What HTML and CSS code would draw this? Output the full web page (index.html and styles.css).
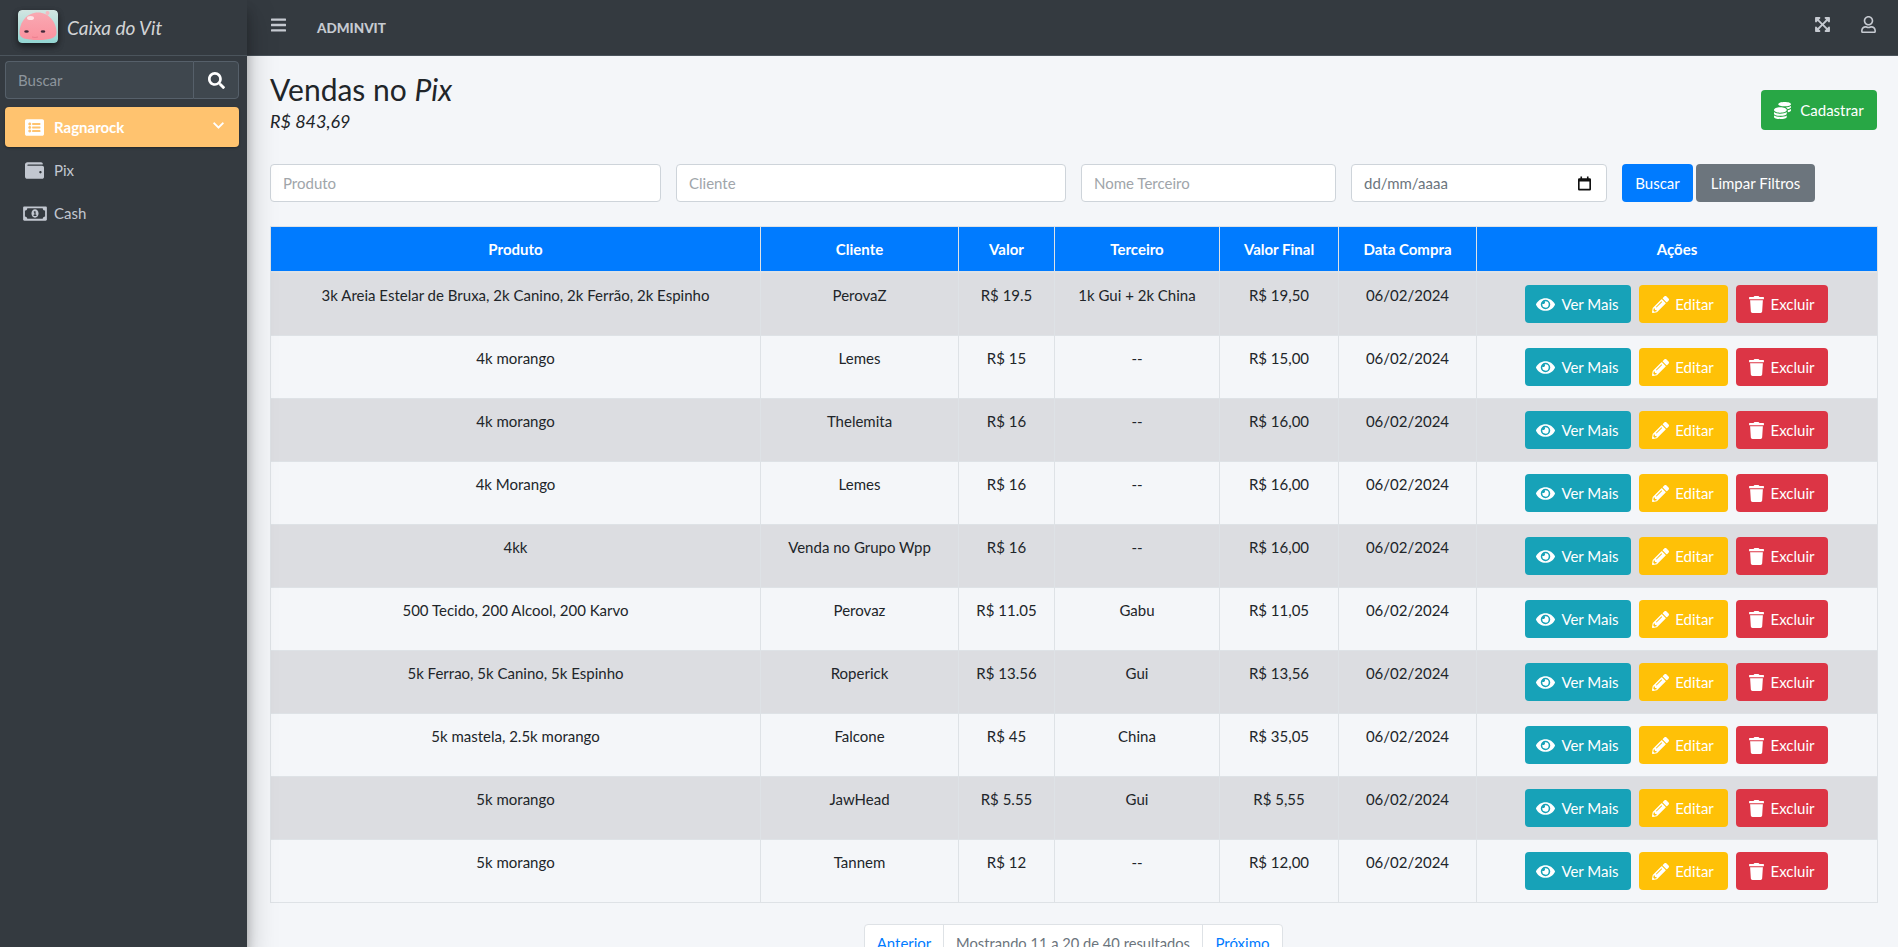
FILE: index.html
```html
<!DOCTYPE html>
<html lang="pt-BR">
<head>
<meta charset="utf-8">
<title>Vendas no Pix</title>
<link rel="stylesheet" href="styles.css">
</head>
<body>
<svg class="sprite" xmlns="http://www.w3.org/2000/svg">
<symbol id="i-search" viewBox="0 0 512 512"><path d="M505 442.7L405.3 343c-4.5-4.5-10.6-7-17-7H372c27.6-35.3 44-79.7 44-128C416 93.1 322.9 0 208 0S0 93.1 0 208s93.1 208 208 208c48.3 0 92.7-16.4 128-44v16.3c0 6.4 2.5 12.5 7 17l99.7 99.7c9.4 9.4 24.6 9.4 33.9 0l28.3-28.3c9.4-9.4 9.4-24.6.1-34zM208 336c-70.7 0-128-57.2-128-128 0-70.7 57.2-128 128-128 70.7 0 128 57.2 128 128 0 70.7-57.2 128-128 128z"/></symbol>
<symbol id="i-bars" viewBox="0 0 448 512"><path d="M16 132h416c8.837 0 16-7.163 16-16V76c0-8.837-7.163-16-16-16H16C7.163 60 0 67.163 0 76v40c0 8.837 7.163 16 16 16zm0 160h416c8.837 0 16-7.163 16-16v-40c0-8.837-7.163-16-16-16H16c-8.837 0-16 7.163-16 16v40c0 8.837 7.163 16 16 16zm0 160h416c8.837 0 16-7.163 16-16v-40c0-8.837-7.163-16-16-16H16c-8.837 0-16 7.163-16 16v40c0 8.837 7.163 16 16 16z"/></symbol>
<symbol id="i-eye" viewBox="0 0 576 512"><path d="M572.52 241.4C518.29 135.59 410.93 64 288 64S57.68 135.64 3.48 241.41a32.35 32.35 0 0 0 0 29.19C57.71 376.41 165.07 448 288 448s230.32-71.64 284.52-177.41a32.35 32.35 0 0 0 0-29.19zM288 400a144 144 0 1 1 144-144 143.93 143.93 0 0 1-144 144zm0-240a95.31 95.31 0 0 0-25.31 3.79 47.85 47.85 0 0 1-66.9 66.9A95.78 95.78 0 1 0 288 160z"/></symbol>
<symbol id="i-pencil" viewBox="0 0 512 512"><path d="M497.9 142.1l-46.1 46.1c-4.7 4.7-12.3 4.7-17 0l-111-111c-4.7-4.7-4.7-12.3 0-17l46.1-46.1c18.7-18.7 49.1-18.7 67.9 0l60.1 60.1c18.8 18.7 18.8 49.1 0 67.9zM284.2 99.8L21.6 362.4.4 483.9c-2.9 16.4 11.4 30.6 27.8 27.8l121.5-21.3 262.6-262.6c4.7-4.7 4.7-12.3 0-17l-111-111c-4.8-4.7-12.4-4.7-17.1 0zM124.1 339.9c-5.5-5.5-5.5-14.3 0-19.8l154-154c5.5-5.5 14.3-5.5 19.8 0s5.5 14.3 0 19.8l-154 154c-5.5 5.5-14.3 5.5-19.8 0zM88 424h48v36.3l-64.5 11.3-31.1-31.1L51.7 376H88v48z"/></symbol>
<symbol id="i-trash" viewBox="0 0 448 512"><path d="M432 32H312l-9.4-18.7A24 24 0 0 0 281.1 0H166.8a23.72 23.72 0 0 0-21.4 13.3L136 32H16A16 16 0 0 0 0 48v32a16 16 0 0 0 16 16h416a16 16 0 0 0 16-16V48a16 16 0 0 0-16-16zM53.2 467a48 48 0 0 0 47.9 45h245.8a48 48 0 0 0 47.9-45L416 128H32z"/></symbol>
<symbol id="i-wallet" viewBox="0 0 512 512"><path d="M461.2 128H80c-8.84 0-16-7.16-16-16s7.16-16 16-16h384c8.84 0 16-7.16 16-16 0-26.51-21.49-48-48-48H64C28.65 32 0 60.65 0 96v320c0 35.35 28.65 64 64 64h397.2c28.02 0 50.8-21.53 50.8-48V176c0-26.47-22.78-48-50.8-48zM416 336c-17.67 0-32-14.33-32-32s14.33-32 32-32 32 14.33 32 32-14.33 32-32 32z"/></symbol>
<symbol id="i-money" viewBox="0 0 640 512"><path d="M320 144c-53.02 0-96 50.14-96 112 0 61.85 42.98 112 96 112 53 0 96-50.13 96-112 0-61.86-42.98-112-96-112zm40 168c0 4.42-3.58 8-8 8h-64c-4.42 0-8-3.58-8-8v-16c0-4.42 3.58-8 8-8h16v-55.44l-.47.31a7.992 7.992 0 0 1-11.09-2.22l-8.88-13.31a7.992 7.992 0 0 1 2.22-11.09l15.33-10.22a23.99 23.99 0 0 1 13.31-4.03H328c4.42 0 8 3.58 8 8v88h16c4.42 0 8 3.58 8 8v16zM608 64H32C14.33 64 0 78.33 0 96v320c0 17.67 14.33 32 32 32h576c17.67 0 32-14.33 32-32V96c0-17.67-14.33-32-32-32zm-16 272c-35.35 0-64 28.65-64 64H112c0-35.35-28.65-64-64-64V176c35.35 0 64-28.65 64-64h416c0 35.35 28.65 64 64 64v160z"/></symbol>
<symbol id="i-list" viewBox="0 0 512 512"><path d="M464 480H48c-26.51 0-48-21.49-48-48V80c0-26.51 21.49-48 48-48h416c26.51 0 48 21.49 48 48v352c0 26.51-21.49 48-48 48zM128 120c-22.091 0-40 17.909-40 40s17.909 40 40 40 40-17.909 40-40-17.909-40-40-40zm0 96c-22.091 0-40 17.909-40 40s17.909 40 40 40 40-17.909 40-40-17.909-40-40-40zm0 96c-22.091 0-40 17.909-40 40s17.909 40 40 40 40-17.909 40-40-17.909-40-40-40zm288-136v-32c0-6.627-5.373-12-12-12H204c-6.627 0-12 5.373-12 12v32c0 6.627 5.373 12 12 12h200c6.627 0 12-5.373 12-12zm0 96v-32c0-6.627-5.373-12-12-12H204c-6.627 0-12 5.373-12 12v32c0 6.627 5.373 12 12 12h200c6.627 0 12-5.373 12-12zm0 96v-32c0-6.627-5.373-12-12-12H204c-6.627 0-12 5.373-12 12v32c0 6.627 5.373 12 12 12h200c6.627 0 12-5.373 12-12z"/></symbol>
<symbol id="i-chevron" viewBox="0 0 448 512"><path d="M207.029 381.476L12.686 187.132c-9.373-9.373-9.373-24.569 0-33.941l22.667-22.667c9.357-9.357 24.522-9.375 33.901-.04L224 284.505l154.745-154.021c9.379-9.335 24.544-9.317 33.901.04l22.667 22.667c9.373 9.373 9.373 24.569 0 33.941L240.971 381.476c-9.373 9.372-24.569 9.372-33.942 0z"/></symbol>
<symbol id="i-expand" viewBox="0 0 448 512"><path d="M448 344v112a23.94 23.94 0 0 1-24 24H312c-21.39 0-32.09-25.9-17-41l36.2-36.2L224 295.6 116.77 402.9 153 439c15.09 15.1 4.39 41-17 41H24a23.94 23.94 0 0 1-24-24V344c0-21.4 25.89-32.1 41-17l36.19 36.2L184.46 256 77.18 148.7 41 185c-15.1 15.1-41 4.4-41-17V56a23.94 23.94 0 0 1 24-24h112c21.39 0 32.09 25.9 17 41l-36.2 36.2L224 216.4l107.23-107.3L295 73c-15.09-15.1-4.39-41 17-41h112a23.94 23.94 0 0 1 24 24v112c0 21.4-25.89 32.1-41 17l-36.19-36.2L263.54 256l107.28 107.3L407 327.1c15.1-15.2 41-4.5 41 16.9z"/></symbol>
<symbol id="i-user" viewBox="0 0 448 512"><path d="M313.6 304c-28.7 0-42.5 16-89.6 16-47.1 0-60.8-16-89.6-16C60.2 304 0 364.2 0 438.4V464c0 26.5 21.5 48 48 48h352c26.5 0 48-21.5 48-48v-25.6c0-74.2-60.2-134.4-134.4-134.4zM400 464H48v-25.6c0-47.6 38.8-86.4 86.4-86.4 14.6 0 38.3 16 89.6 16 51.7 0 74.9-16 89.6-16 47.6 0 86.4 38.8 86.4 86.4V464zM224 288c79.5 0 144-64.5 144-144S303.5 0 224 0 80 64.5 80 144s64.5 144 144 144zm0-240c52.9 0 96 43.1 96 96s-43.1 96-96 96-96-43.1-96-96 43.1-96 96-96z"/></symbol>
<symbol id="i-coins" viewBox="0 0 512 512"><path d="M0 405.3V448c0 35.3 86 64 192 64s192-28.7 192-64v-42.7C342.7 434.4 267.2 448 192 448S41.3 434.4 0 405.3zM320 128c106 0 192-28.7 192-64S426 0 320 0 128 28.7 128 64s86 64 192 64zM0 300.4V352c0 35.3 86 64 192 64s192-28.7 192-64v-51.6c-41.3 34-116.9 51.6-192 51.6S41.3 334.4 0 300.4zm416 11c57.3-11.1 96-31.7 96-55.4v-42.7c-23.2 16.4-57.3 27.6-96 34.5v63.6zM192 160C86 160 0 195.8 0 240s86 80 192 80 192-35.8 192-80-86-80-192-80zm219.3 56.3c60-10.8 100.7-32 100.7-56.3v-42.7c-35.5 25.1-96.5 38.6-160.7 41.8 29.5 14.3 51.2 33.5 60 57.2z"/></symbol>
<symbol id="i-calendar" viewBox="0 0 16 17"><path d="M3 0h2v2h6V0h2v2h1.500A1.500 1.500 0 0 1 16 3.500v12a1.500 1.500 0 0 1-1.500 1.500h-13A1.500 1.500 0 0 1 0 15.500v-12A1.500 1.500 0 0 1 1.500 2H3zM2 6v9h12V6z"/></symbol>
</svg>

<aside class="sidebar">
  <a class="brand">
    <svg class="logo" viewBox="0 0 40 33" xmlns="http://www.w3.org/2000/svg">
      <defs>
        <linearGradient id="logo-bg" x1="0" y1="0" x2="0" y2="1"><stop offset="0" stop-color="#d2e6e2"/><stop offset="1" stop-color="#93d5d2"/></linearGradient>
        <linearGradient id="logo-blob" x1="0" y1="0" x2="0" y2="1"><stop offset="0" stop-color="#f9a9b2"/><stop offset="1" stop-color="#fa929f"/></linearGradient>
      </defs>
      <rect width="40" height="33" rx="4" fill="url(#logo-bg)"/>
      <path d="M1.500 23C1.500 12 9 2.500 20 2.500c11 0 18.500 10 18.500 20 0 5.500-6 7.500-18.500 7.500S1.500 28 1.500 23z" fill="url(#logo-blob)"/>
      <ellipse cx="12.500" cy="8" rx="3.500" ry="2" fill="#fde4e7"/>
      <circle cx="29.500" cy="3" r="2" fill="#f4b8bf"/>
      <ellipse cx="8.500" cy="21.500" rx="2.300" ry="1.200" fill="#43293a"/>
      <ellipse cx="25" cy="21.500" rx="2.300" ry="1.200" fill="#43293a"/>
      <path d="M14 27q3 1 6 0" stroke="#e87a8a" stroke-width=".8" fill="none"/>
    </svg>
    <span class="brand-text">Caixa do Vit</span>
  </a>
  <div class="side-body">
    <form class="side-search">
      <input class="side-input" type="text" placeholder="Buscar">
      <span class="side-search-btn"><svg class="ic ic-search"><use href="#i-search"/></svg></span>
    </form>
    <nav class="menu">
      <a class="menu-item is-active"><svg class="menu-ic"><use href="#i-list"/></svg><span class="menu-label">Ragnarock</span><svg class="menu-chevron"><use href="#i-chevron"/></svg></a>
      <a class="menu-item"><svg class="menu-ic"><use href="#i-wallet"/></svg><span class="menu-label">Pix</span></a>
      <a class="menu-item"><svg class="menu-ic menu-ic-wide"><use href="#i-money"/></svg><span class="menu-label">Cash</span></a>
    </nav>
  </div>
</aside>

<div class="main">
  <header class="topbar">
    <svg class="top-ic top-bars"><use href="#i-bars"/></svg>
    <span class="top-title">ADMINVIT</span>
    <svg class="top-ic top-expand"><use href="#i-expand"/></svg>
    <svg class="top-ic top-user"><use href="#i-user"/></svg>
  </header>
  <main class="content">
    <div class="page-head">
      <div>
        <h1 class="page-title">Vendas no <em>Pix</em></h1>
        <div class="page-total">R$ 843,69</div>
      </div>
      <a class="btn btn-green btn-add"><svg class="ic ic-coins"><use href="#i-coins"/></svg>Cadastrar</a>
    </div>
    <form class="filters">
      <input class="field f-lg" type="text" placeholder="Produto">
      <input class="field f-lg f-client" type="text" placeholder="Cliente">
      <input class="field f-md" type="text" placeholder="Nome Terceiro">
      <div class="field f-date date-field"><span>dd/mm/aaaa</span><svg class="ic-cal"><use href="#i-calendar"/></svg></div>
      <div class="filter-actions">
        <a class="btn btn-blue">Buscar</a>
        <a class="btn btn-gray">Limpar Filtros</a>
      </div>
    </form>
    <table class="sales">
      <colgroup>
        <col class="c1"><col class="c2"><col class="c3"><col class="c4"><col class="c5"><col class="c6"><col class="c7">
      </colgroup>
      <thead>
        <tr><th>Produto</th><th>Cliente</th><th>Valor</th><th>Terceiro</th><th>Valor Final</th><th>Data Compra</th><th>Ações</th></tr>
      </thead>
      <tbody>
        <tr><td>3k Areia Estelar de Bruxa, 2k Canino, 2k Ferrão, 2k Espinho</td><td>PerovaZ</td><td>R$ 19.5</td><td>1k Gui + 2k China</td><td>R$ 19,50</td><td>06/02/2024</td><td class="acts"><a class="btn btn-teal"><svg class="ic ic-eye"><use href="#i-eye"/></svg>Ver Mais</a><a class="btn btn-yellow"><svg class="ic ic-pen"><use href="#i-pencil"/></svg>Editar</a><a class="btn btn-red"><svg class="ic ic-trash"><use href="#i-trash"/></svg>Excluir</a></td></tr>
        <tr><td>4k morango</td><td>Lemes</td><td>R$ 15</td><td>--</td><td>R$ 15,00</td><td>06/02/2024</td><td class="acts"><a class="btn btn-teal"><svg class="ic ic-eye"><use href="#i-eye"/></svg>Ver Mais</a><a class="btn btn-yellow"><svg class="ic ic-pen"><use href="#i-pencil"/></svg>Editar</a><a class="btn btn-red"><svg class="ic ic-trash"><use href="#i-trash"/></svg>Excluir</a></td></tr>
        <tr><td>4k morango</td><td>Thelemita</td><td>R$ 16</td><td>--</td><td>R$ 16,00</td><td>06/02/2024</td><td class="acts"><a class="btn btn-teal"><svg class="ic ic-eye"><use href="#i-eye"/></svg>Ver Mais</a><a class="btn btn-yellow"><svg class="ic ic-pen"><use href="#i-pencil"/></svg>Editar</a><a class="btn btn-red"><svg class="ic ic-trash"><use href="#i-trash"/></svg>Excluir</a></td></tr>
        <tr><td>4k Morango</td><td>Lemes</td><td>R$ 16</td><td>--</td><td>R$ 16,00</td><td>06/02/2024</td><td class="acts"><a class="btn btn-teal"><svg class="ic ic-eye"><use href="#i-eye"/></svg>Ver Mais</a><a class="btn btn-yellow"><svg class="ic ic-pen"><use href="#i-pencil"/></svg>Editar</a><a class="btn btn-red"><svg class="ic ic-trash"><use href="#i-trash"/></svg>Excluir</a></td></tr>
        <tr><td>4kk</td><td>Venda no Grupo Wpp</td><td>R$ 16</td><td>--</td><td>R$ 16,00</td><td>06/02/2024</td><td class="acts"><a class="btn btn-teal"><svg class="ic ic-eye"><use href="#i-eye"/></svg>Ver Mais</a><a class="btn btn-yellow"><svg class="ic ic-pen"><use href="#i-pencil"/></svg>Editar</a><a class="btn btn-red"><svg class="ic ic-trash"><use href="#i-trash"/></svg>Excluir</a></td></tr>
        <tr><td>500 Tecido, 200 Alcool, 200 Karvo</td><td>Perovaz</td><td>R$ 11.05</td><td>Gabu</td><td>R$ 11,05</td><td>06/02/2024</td><td class="acts"><a class="btn btn-teal"><svg class="ic ic-eye"><use href="#i-eye"/></svg>Ver Mais</a><a class="btn btn-yellow"><svg class="ic ic-pen"><use href="#i-pencil"/></svg>Editar</a><a class="btn btn-red"><svg class="ic ic-trash"><use href="#i-trash"/></svg>Excluir</a></td></tr>
        <tr><td>5k Ferrao, 5k Canino, 5k Espinho</td><td>Roperick</td><td>R$ 13.56</td><td>Gui</td><td>R$ 13,56</td><td>06/02/2024</td><td class="acts"><a class="btn btn-teal"><svg class="ic ic-eye"><use href="#i-eye"/></svg>Ver Mais</a><a class="btn btn-yellow"><svg class="ic ic-pen"><use href="#i-pencil"/></svg>Editar</a><a class="btn btn-red"><svg class="ic ic-trash"><use href="#i-trash"/></svg>Excluir</a></td></tr>
        <tr><td>5k mastela, 2.5k morango</td><td>Falcone</td><td>R$ 45</td><td>China</td><td>R$ 35,05</td><td>06/02/2024</td><td class="acts"><a class="btn btn-teal"><svg class="ic ic-eye"><use href="#i-eye"/></svg>Ver Mais</a><a class="btn btn-yellow"><svg class="ic ic-pen"><use href="#i-pencil"/></svg>Editar</a><a class="btn btn-red"><svg class="ic ic-trash"><use href="#i-trash"/></svg>Excluir</a></td></tr>
        <tr><td>5k morango</td><td>JawHead</td><td>R$ 5.55</td><td>Gui</td><td>R$ 5,55</td><td>06/02/2024</td><td class="acts"><a class="btn btn-teal"><svg class="ic ic-eye"><use href="#i-eye"/></svg>Ver Mais</a><a class="btn btn-yellow"><svg class="ic ic-pen"><use href="#i-pencil"/></svg>Editar</a><a class="btn btn-red"><svg class="ic ic-trash"><use href="#i-trash"/></svg>Excluir</a></td></tr>
        <tr><td>5k morango</td><td>Tannem</td><td>R$ 12</td><td>--</td><td>R$ 12,00</td><td>06/02/2024</td><td class="acts"><a class="btn btn-teal"><svg class="ic ic-eye"><use href="#i-eye"/></svg>Ver Mais</a><a class="btn btn-yellow"><svg class="ic ic-pen"><use href="#i-pencil"/></svg>Editar</a><a class="btn btn-red"><svg class="ic ic-trash"><use href="#i-trash"/></svg>Excluir</a></td></tr>
      </tbody>
    </table>
    <nav class="pager">
      <a class="pager-link pager-prev">Anterior</a>
      <span class="pager-info">Mostrando 11 a 20 de 40 resultados</span>
      <a class="pager-link pager-next">Próximo</a>
    </nav>
  </main>
</div>
</body>
</html>
```
FILE: styles.css
```css
* { box-sizing: border-box; }
html, body { height: 100%; overflow: hidden; }
body {
  margin: 0;
  display: flex;
  font-family: "Lato", "Noto Sans", sans-serif;
  font-size: 15px;
  line-height: 24px;
  color: #212529;
  background: #f4f6f9;
}
.sprite { display: none; }
svg { fill: currentColor; }

/* sidebar */
.sidebar {
  width: 247px;
  flex: none;
  background: #343a40;
  box-shadow: 0 14px 28px rgba(0,0,0,.25), 0 10px 10px rgba(0,0,0,.22);
  position: relative;
  z-index: 2;
}
.brand {
  height: 56px;
  display: flex;
  align-items: center;
  padding: 0 0 3px 18px;
  border-bottom: 1px solid #4b545c;
}
.logo {
  width: 40px;
  height: 33px;
  margin-right: 9px;
  box-shadow: 0 3px 6px rgba(0,0,0,.3), 0 3px 6px rgba(0,0,0,.3);
  border-radius: 4px;
}
.brand-text {
  font-size: 19px;
  font-style: italic;
  font-weight: 400;
  padding-top: 3px;
  color: rgba(255,255,255,.8);
}
.side-body { padding: 5px 8px 0 5px; }
.side-search { display: flex; height: 38px; }
.side-input {
  flex: 1;
  min-width: 0;
  background: #3f474e;
  border: 1px solid #56606a;
  border-right: 0;
  border-radius: 4px 0 0 4px;
  padding: 0 12px;
  font: inherit;
  color: #fff;
}
.side-input::placeholder { color: #8d959c; opacity: 1; }
.side-search-btn {
  width: 46px;
  flex: none;
  background: #3f474e;
  border: 1px solid #56606a;
  border-radius: 0 4px 4px 0;
  display: flex;
  align-items: center;
  justify-content: center;
  color: #fff;
}
.ic-search { width: 17px; height: 17px; }
.menu { margin-top: 8px; display: flex; flex-direction: column; gap: 3px; }
.menu-item {
  height: 40px;
  display: flex;
  align-items: center;
  padding: 0 15px 0 20px;
  border-radius: 4px;
  color: #c2c7d0;
}
.menu-item.is-active {
  background: #ffc36f;
  color: #fff;
  font-weight: 700;
  box-shadow: 0 1px 3px rgba(0,0,0,.12), 0 1px 2px rgba(0,0,0,.24);
}
.menu-ic { width: 19px; height: 19px; margin-right: 10px; }
.menu-ic-wide { width: 24px; height: 19px; margin-left: -2px; margin-right: 7px; }
.menu-label { flex: 1; }
.menu-chevron { width: 11px; height: 13px; margin-bottom: 4px; }

/* top bar */
.main { flex: 1; min-width: 0; display: flex; flex-direction: column; }
.topbar {
  height: 56px;
  flex: none;
  display: flex;
  align-items: center;
  background: #343a40;
  border-bottom: 1px solid #4b545c;
  color: #c6cad1;
  padding: 0 22px 0 24px;
}
.top-ic { flex: none; }
.top-bars { width: 15px; height: 18px; margin-bottom: 6px; }
.top-title { margin-left: 31px; font-weight: 900; font-size: 13.500px; }
.top-expand { width: 15px; height: 17px; margin-left: auto; margin-bottom: 6px; }
.top-user { width: 15px; height: 17px; margin-left: 31px; margin-bottom: 6px; }

/* content */
.content { flex: 1; padding: 15px 21px 0 23px; min-height: 0; }
.page-head { display: flex; justify-content: space-between; align-items: flex-start; height: 93px; }
.page-title { margin: 0; font-size: 30px; line-height: 36px; font-weight: 400; }
.page-total { font-size: 18px; line-height: 24px; font-style: italic; font-weight: 400; margin-top: 2px; }
.btn {
  display: inline-flex;
  align-items: center;
  justify-content: center;
  height: 38px;
  border-radius: 4px;
  color: #fff;
  white-space: nowrap;
}
.ic { flex: none; }
.btn-add { width: 116px; height: 40px; margin-top: 19px; }
.ic-coins { width: 17px; height: 17px; margin-right: 9px; }
.btn-green { background: #28a745; }
.btn-blue { width: 71px; background: #007bff; }
.btn-gray { width: 119px; background: #6c757d; }
.btn-teal { width: 106px; background: #17a2b8; }
.btn-yellow { width: 89px; background: #ffc107; }
.btn-red { width: 92px; background: #dc3545; }

.filters { display: flex; align-items: center; gap: 15px; height: 38px; }
.field {
  height: 38px;
  background: #fff;
  border: 1px solid #ced4da;
  border-radius: 4px;
  padding: 0 12px;
  font: inherit;
  color: #495057;
}
.field::placeholder { color: #a0a5aa; opacity: 1; }
.f-lg { width: 391px; }
.f-client { width: 390px; }
.f-md { width: 255px; }
.f-date { width: 256px; }
.date-field { display: flex; align-items: center; justify-content: space-between; padding-right: 15px; color: #6c757d; }
.ic-cal { width: 13px; height: 15px; color: #111; }
.filter-actions { display: flex; gap: 3px; }

/* table */
.sales {
  width: 1607px;
  table-layout: fixed;
  border-collapse: collapse;
  margin-top: 24px;
  text-align: center;
}
.c1 { width: 490px; }
.c2 { width: 198px; }
.c3 { width: 96px; }
.c4 { width: 165px; }
.c5 { width: 119px; }
.c6 { width: 138px; }
.c7 { width: 401px; }
.sales th, .sales td { border: 1px solid #dee2e6; vertical-align: top; }
.sales th { background: #007bff; color: #fff; font-weight: 700; border-bottom-width: 2px; padding: 10px 12px; }
.sales td { padding: 10px 12px 14px; }
.sales tbody tr:nth-child(odd) { background: #dcdde1; }
.sales td.acts { white-space: nowrap; padding: 12px 13px 12px 11px; }
.acts .btn { margin: 0 4px; }
.ic-eye { width: 19px; height: 17px; margin-right: 6px; }
.ic-pen { width: 17px; height: 17px; margin-right: 6px; }
.ic-trash { width: 15px; height: 17px; margin-right: 7px; }

/* pagination */
.pager {
  margin: 21px 0 0 594px;
  display: inline-flex;
  height: 38px;
  background: #fff;
  border: 1px solid #dee2e6;
  border-radius: 4px;
}
.pager-link { color: #007bff; padding-top: 6px; text-align: center; }
.pager-prev { width: 78px; }
.pager-next { width: 79px; }
.pager-info { width: 260px; text-align: center; font-size: 14.700px; color: #6c757d; padding-top: 6px; border-left: 1px solid #dee2e6; border-right: 1px solid #dee2e6; }
```
